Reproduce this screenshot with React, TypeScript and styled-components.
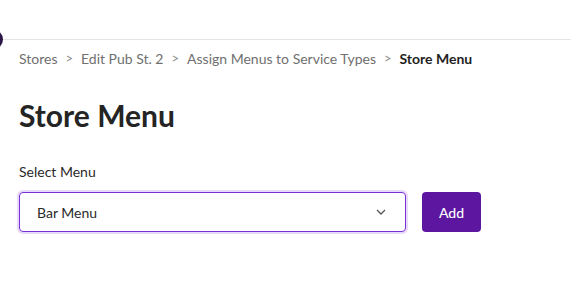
import React from "react";
import styled, { createGlobalStyle } from "styled-components";

const GlobalStyle = createGlobalStyle`
  body {
    margin: 0;
    background: #ffffff;
    font-family: Lato, "Noto Sans", sans-serif;
    color: #222222;
  }
`;

const Page = styled.div`
  position: relative;
  width: 571px;
  height: 284px;
  overflow: hidden;
`;

const TopBar = styled.div`
  height: 39px;
  border-bottom: 1px solid #e4e4e4;
`;

const Dot = styled.div`
  position: absolute;
  left: -18px;
  top: 29px;
  width: 21px;
  height: 21px;
  border-radius: 50%;
  background: #2b1747;
`;

const Content = styled.div`
  padding: 0 19px;
`;

const Crumbs = styled.nav`
  display: flex;
  align-items: center;
  gap: 8px;
  height: 36px;
  font-size: 14px;
  color: #6f6f6f;
`;

const Crumb = styled.span<{ current?: boolean }>`
  font-weight: ${({ current }) => (current ? 700 : 400)};
  color: ${({ current }) => (current ? "#1f1f1f" : "#6f6f6f")};
`;

const Sep = styled.span`
  font-size: 13px;
  color: #8a8a8a;
`;

const Title = styled.h1`
  margin: 21px 0 0;
  font-size: 30px;
  line-height: 36px;
  font-weight: 700;
  color: #242424;
`;

const Label = styled.div`
  margin-top: 30px;
  font-size: 14px;
  line-height: 18px;
  color: #2a2a2a;
`;

const Row = styled.div`
  margin-top: 11px;
  display: flex;
  gap: 16px;
`;

const Select = styled.div`
  box-sizing: border-box;
  width: 387px;
  height: 40px;
  display: flex;
  align-items: center;
  justify-content: space-between;
  padding: 0 19px 0 17px;
  border: 1.5px solid #7a30d6;
  border-radius: 4px;
  box-shadow: 0 0 0 2px #e7d9fa;
  font-size: 14px;
  color: #2a2a2a;
`;

const AddButton = styled.button`
  width: 59px;
  height: 40px;
  border: none;
  border-radius: 4px;
  background: #5c16a0;
  color: #ffffff;
  font-family: inherit;
  font-size: 14px;
  font-weight: 500;
`;

const crumbs = ["Stores", "Edit Pub St. 2", "Assign Menus to Service Types"];

export default function App() {
  return (
    <Page>
      <GlobalStyle />
      <TopBar />
      <Dot />
      <Content>
        <Crumbs>
          {crumbs.map((c) => (
            <React.Fragment key={c}>
              <Crumb>{c}</Crumb>
              <Sep>&gt;</Sep>
            </React.Fragment>
          ))}
          <Crumb current>Store Menu</Crumb>
        </Crumbs>
        <Title>Store Menu</Title>
        <Label>Select Menu</Label>
        <Row>
          <Select>
            <span>Bar Menu</span>
            <svg width="10" height="6" viewBox="0 0 10 6">
              <path d="M1 1l4 4 4-4" fill="none" stroke="#555" strokeWidth="1.3" />
            </svg>
          </Select>
          <AddButton>Add</AddButton>
        </Row>
      </Content>
    </Page>
  );
}
